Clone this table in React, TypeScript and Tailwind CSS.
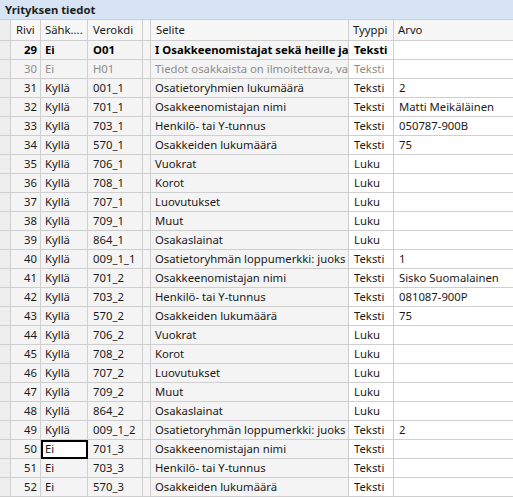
import React from 'react';

type Row = {
  nr: number;
  sahk: string;
  code: string;
  selite: string;
  tyyppi: string;
  arvo?: string;
  kind?: 'bold' | 'muted';
};

// selite texts are cut where the column ends, as in the grid
const rows: Row[] = [
  { nr: 29, sahk: 'Ei', code: 'O01', selite: 'I Osakkeenomistajat sekä heille ja', tyyppi: 'Teksti', kind: 'bold' },
  { nr: 30, sahk: 'Ei', code: 'H01', selite: 'Tiedot osakkaista on ilmoitettava, va', tyyppi: 'Teksti', kind: 'muted' },
  { nr: 31, sahk: 'Kyllä', code: '001_1', selite: 'Osatietoryhmien lukumäärä', tyyppi: 'Teksti', arvo: '2' },
  { nr: 32, sahk: 'Kyllä', code: '701_1', selite: 'Osakkeenomistajan nimi', tyyppi: 'Teksti', arvo: 'Matti Meikäläinen' },
  { nr: 33, sahk: 'Kyllä', code: '703_1', selite: 'Henkilö- tai Y-tunnus', tyyppi: 'Teksti', arvo: '050787-900B' },
  { nr: 34, sahk: 'Kyllä', code: '570_1', selite: 'Osakkeiden lukumäärä', tyyppi: 'Teksti', arvo: '75' },
  { nr: 35, sahk: 'Kyllä', code: '706_1', selite: 'Vuokrat', tyyppi: 'Luku' },
  { nr: 36, sahk: 'Kyllä', code: '708_1', selite: 'Korot', tyyppi: 'Luku' },
  { nr: 37, sahk: 'Kyllä', code: '707_1', selite: 'Luovutukset', tyyppi: 'Luku' },
  { nr: 38, sahk: 'Kyllä', code: '709_1', selite: 'Muut', tyyppi: 'Luku' },
  { nr: 39, sahk: 'Kyllä', code: '864_1', selite: 'Osakaslainat', tyyppi: 'Luku' },
  { nr: 40, sahk: 'Kyllä', code: '009_1_1', selite: 'Osatietoryhmän loppumerkki: juoks', tyyppi: 'Teksti', arvo: '1' },
  { nr: 41, sahk: 'Kyllä', code: '701_2', selite: 'Osakkeenomistajan nimi', tyyppi: 'Teksti', arvo: 'Sisko Suomalainen' },
  { nr: 42, sahk: 'Kyllä', code: '703_2', selite: 'Henkilö- tai Y-tunnus', tyyppi: 'Teksti', arvo: '081087-900P' },
  { nr: 43, sahk: 'Kyllä', code: '570_2', selite: 'Osakkeiden lukumäärä', tyyppi: 'Teksti', arvo: '75' },
  { nr: 44, sahk: 'Kyllä', code: '706_2', selite: 'Vuokrat', tyyppi: 'Luku' },
  { nr: 45, sahk: 'Kyllä', code: '708_2', selite: 'Korot', tyyppi: 'Luku' },
  { nr: 46, sahk: 'Kyllä', code: '707_2', selite: 'Luovutukset', tyyppi: 'Luku' },
  { nr: 47, sahk: 'Kyllä', code: '709_2', selite: 'Muut', tyyppi: 'Luku' },
  { nr: 48, sahk: 'Kyllä', code: '864_2', selite: 'Osakaslainat', tyyppi: 'Luku' },
  { nr: 49, sahk: 'Kyllä', code: '009_1_2', selite: 'Osatietoryhmän loppumerkki: juoks', tyyppi: 'Teksti', arvo: '2' },
  { nr: 50, sahk: 'Ei', code: '701_3', selite: 'Osakkeenomistajan nimi', tyyppi: 'Teksti' },
  { nr: 51, sahk: 'Ei', code: '703_3', selite: 'Henkilö- tai Y-tunnus', tyyppi: 'Teksti' },
  { nr: 52, sahk: 'Ei', code: '570_3', selite: 'Osakkeiden lukumäärä', tyyppi: 'Teksti' },
];

const cols = 'grid grid-cols-[11px_30px_47px_55px_8px_198px_45px_1fr]';
const cell = 'h-[19px] border-r border-b border-[#cfcfcf] overflow-hidden whitespace-nowrap leading-[18px]';
const head = 'h-[21px] border-r border-b border-[#cfcfcf] leading-[20px] overflow-hidden whitespace-nowrap';
const gray = 'bg-[#f4f4f4]';

export default function App() {
  return (
    <div className="w-[513px] h-[497px] overflow-hidden bg-white text-[11.3px] text-[#1a1a1a] font-['Noto_Sans','Open_Sans',sans-serif]">
      <div className="h-[20px] bg-[#d6e4f3] border-b border-[#c3d3e6] px-[5px] leading-[19px] font-bold text-[#1e1e1e]">
        Yrityksen tiedot
      </div>

      <div className={`${cols} bg-[#f7f7f7]`}>
        <div className={`${head} bg-[#eeeeee]`} />
        <div className={`${head} pl-[5px]`}>Rivi</div>
        <div className={`${head} pl-[4px]`}>Sähk....</div>
        <div className={`${head} pl-[5px]`}>Verokdi</div>
        <div className={head} />
        <div className={`${head} pl-[5px]`}>Selite</div>
        <div className={`${head} pl-[4px]`}>Tyyppi</div>
        <div className="h-[21px] border-b border-[#cfcfcf] pl-[4px] leading-[20px]">Arvo</div>
      </div>

      {rows.map((r) => {
        const tone =
          r.kind === 'bold' ? 'font-bold text-black' : r.kind === 'muted' ? 'text-[#8c8c8c]' : '';
        return (
          <div key={r.nr} className={`${cols} ${tone}`}>
            <div className={`${cell} bg-[#eeeeee]`} />
            <div className={`${cell} ${gray} text-right pr-[3px]`}>{r.nr}</div>
            <div className={`${cell} ${gray} pl-[4px] ${r.nr === 50 ? 'bg-white outline-2 outline-black -outline-offset-2' : ''}`}>
              {r.sahk}
            </div>
            <div className={`${cell} ${gray} pl-[5px]`}>{r.code}</div>
            <div className={`${cell} ${gray}`} />
            <div className={`${cell} ${gray} pl-[4px]`}>{r.selite}</div>
            <div className={`${cell} pl-[5px]`}>{r.tyyppi}</div>
            <div className="h-[19px] border-b border-[#cfcfcf] pl-[5px] leading-[18px] whitespace-nowrap overflow-hidden">
              {r.arvo ?? ''}
            </div>
          </div>
        );
      })}
    </div>
  );
}
